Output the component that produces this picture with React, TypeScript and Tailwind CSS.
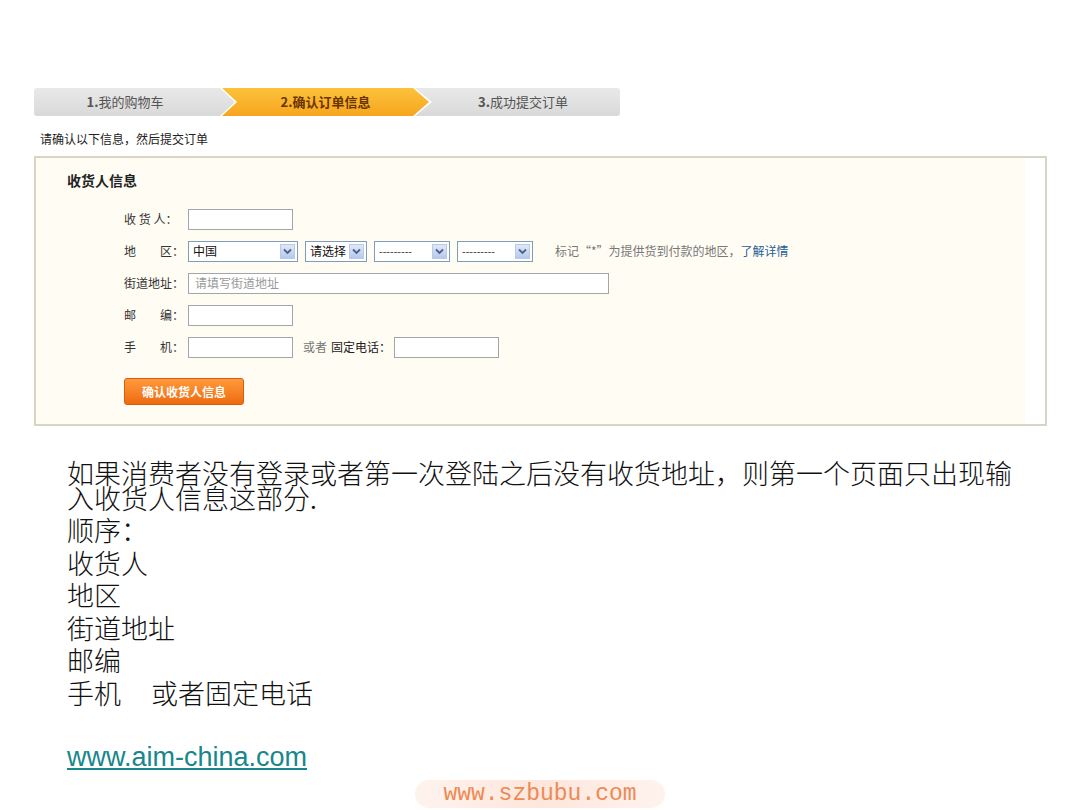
import React from 'react';

const ui = { fontFamily: '"Noto Sans CJK SC", "Liberation Sans", sans-serif' };

const SelectArrow = () => (
  <span className="flex h-[15px] w-[15px] items-center justify-center border border-[#b9c9e6] bg-gradient-to-b from-[#dfe8f8] to-[#b6c9ec]">
    <svg width="9" height="7" viewBox="0 0 9 7">
      <path d="M1 1.5 L4.5 5 L8 1.5" fill="none" stroke="#4d6185" strokeWidth="1.8" />
    </svg>
  </span>
);

const FakeSelect = ({ width, label, dashed }: { width: string; label: string; dashed?: boolean }) => (
  <div className={`flex h-[21px] items-center justify-between border border-[#7f9db9] bg-white pl-[4px] pr-[2px] ${width}`}>
    <span
      className={dashed ? 'text-[11px] text-[#444]' : 'text-[12px] text-[#111]'}
      style={dashed ? { fontFamily: '"Liberation Sans", sans-serif' } : undefined}
    >
      {label}
    </span>
    <SelectArrow />
  </div>
);

const Field = ({ label, children }: { label: React.ReactNode; children: React.ReactNode }) => (
  <div className="flex h-[32px] items-center">
    <div className="w-[64px] text-[12px] text-[#333] whitespace-pre">{label}</div>
    {children}
  </div>
);

const TextBox = ({ width, placeholder }: { width: string; placeholder?: string }) => (
  <div className={`flex h-[21px] items-center border border-[#a5a5a5] bg-white pl-[6px] text-[12px] text-[#999] ${width}`}>
    {placeholder}
  </div>
);

function StepBar() {
  return (
    <div className="relative flex h-[28px] w-[586px] items-center rounded-[3px] bg-gradient-to-b from-[#e9e9e9] to-[#d9d9d9] text-[13px]">
      <div className="flex w-[190px] justify-center pr-[8px] text-[#555]">
        <span className="font-bold">1.</span>我的购物车
      </div>
      <div className="relative h-[28px] w-[212px] -ml-[4px]">
        <div className="absolute inset-0 bg-white [clip-path:polygon(0_0,195px_0,212px_50%,195px_100%,0_100%,15px_50%)]" />
        <div className="absolute inset-y-0 left-[2px] right-[3px] flex items-center justify-center bg-gradient-to-b from-[#fcc23a] to-[#f6a51c] [clip-path:polygon(0_0,191px_0,207px_50%,191px_100%,0_100%,15px_50%)]">
          <span className="font-bold text-[#6a3500]">2.确认订单信息</span>
        </div>
      </div>
      <div className="flex flex-1 justify-center pr-[6px] text-[#555]">
        <span className="font-bold">3.</span>成功提交订单
      </div>
    </div>
  );
}

function ConsigneeBox() {
  return (
    <div className="mt-[10px] flex h-[270px] w-[1013px] border-2 border-[#d9d5c6]">
      <div className="flex-1 bg-[#fffcf4] pl-[31px] pt-[12px]">
        <div className="text-[14px] font-bold leading-[20px] text-[#222]">收货人信息</div>
        <div className="ml-[57px] mt-[13px]">
          <Field label="收 货 人：">
            <TextBox width="w-[105px]" />
          </Field>
          <Field label="地　　区：">
            <div className="flex items-center gap-[7px]">
              <FakeSelect width="w-[110px]" label="中国" />
              <FakeSelect width="w-[62px]" label="请选择" />
              <FakeSelect width="w-[76px]" label="---------" dashed />
              <FakeSelect width="w-[76px]" label="---------" dashed />
            </div>
            <span className="ml-[22px] text-[12px] text-[#777]">
              标记“*”为提供货到付款的地区，<span className="text-[#1f5c96]">了解详情</span>
            </span>
          </Field>
          <Field label="街道地址：">
            <TextBox width="w-[421px]" placeholder="请填写街道地址" />
          </Field>
          <Field label="邮　　编：">
            <TextBox width="w-[105px]" />
          </Field>
          <Field label="手　　机：">
            <TextBox width="w-[105px]" />
            <span className="ml-[10px] text-[12px] text-[#777]">或者</span>
            <span className="ml-[4px] mr-[3px] text-[12px] text-[#222]">固定电话：</span>
            <TextBox width="w-[105px]" />
          </Field>
          <button className="mt-[15px] flex h-[27px] w-[120px] items-center justify-center rounded-[3px] border border-[#d45f08] bg-gradient-to-b from-[#ff9a3a] to-[#ee6a0c] text-[12px] font-bold text-white">
            确认收货人信息
          </button>
        </div>
      </div>
      <div className="w-[20px] bg-white" />
    </div>
  );
}

export default function App() {
  return (
    <div className="relative h-[810px] w-[1080px] overflow-hidden bg-white">
      <div className="pl-[34px] pt-[88px]" style={ui}>
        <StepBar />
        <div className="ml-[6px] mt-[16px] text-[12px] leading-[14px] text-[#222]">请确认以下信息，然后提交订单</div>
        <ConsigneeBox />
      </div>

      <div className="pl-[67px] pt-[37px] text-[27px] font-light text-[#111]" style={{ fontFamily: '"Liberation Serif", "Noto Sans CJK SC", serif' }}>
        <div className="w-[950px] leading-[25px]">
          如果消费者没有登录或者第一次登陆之后没有收货地址，则第一个页面只出现输入收货人信息这部分.
        </div>
        <div className="mt-[3px] leading-[32.5px]">
          <div>顺序：</div>
          <div>收货人</div>
          <div>地区</div>
          <div>街道地址</div>
          <div>邮编</div>
          <div>
            手机<span className="inline-block w-[30px]" />或者固定电话
          </div>
        </div>
        <a
          href="#"
          className="mt-[31px] inline-block text-[27px] leading-[30px] text-[#17878c] underline"
          style={{ fontFamily: '"Liberation Sans", Arial, sans-serif' }}
        >
          www.aim-china.com
        </a>
      </div>

      <div className="absolute bottom-[2px] left-[415px] flex h-[28px] w-[250px] items-center justify-center rounded-full bg-gradient-to-r from-[#fff3ee] via-[#fde6dc] to-[#fff3ee]">
        <span className="text-[23px] text-[#ec8a55]" style={{ fontFamily: '"Liberation Mono", monospace' }}>
          www.szbubu.com
        </span>
      </div>
    </div>
  );
}
